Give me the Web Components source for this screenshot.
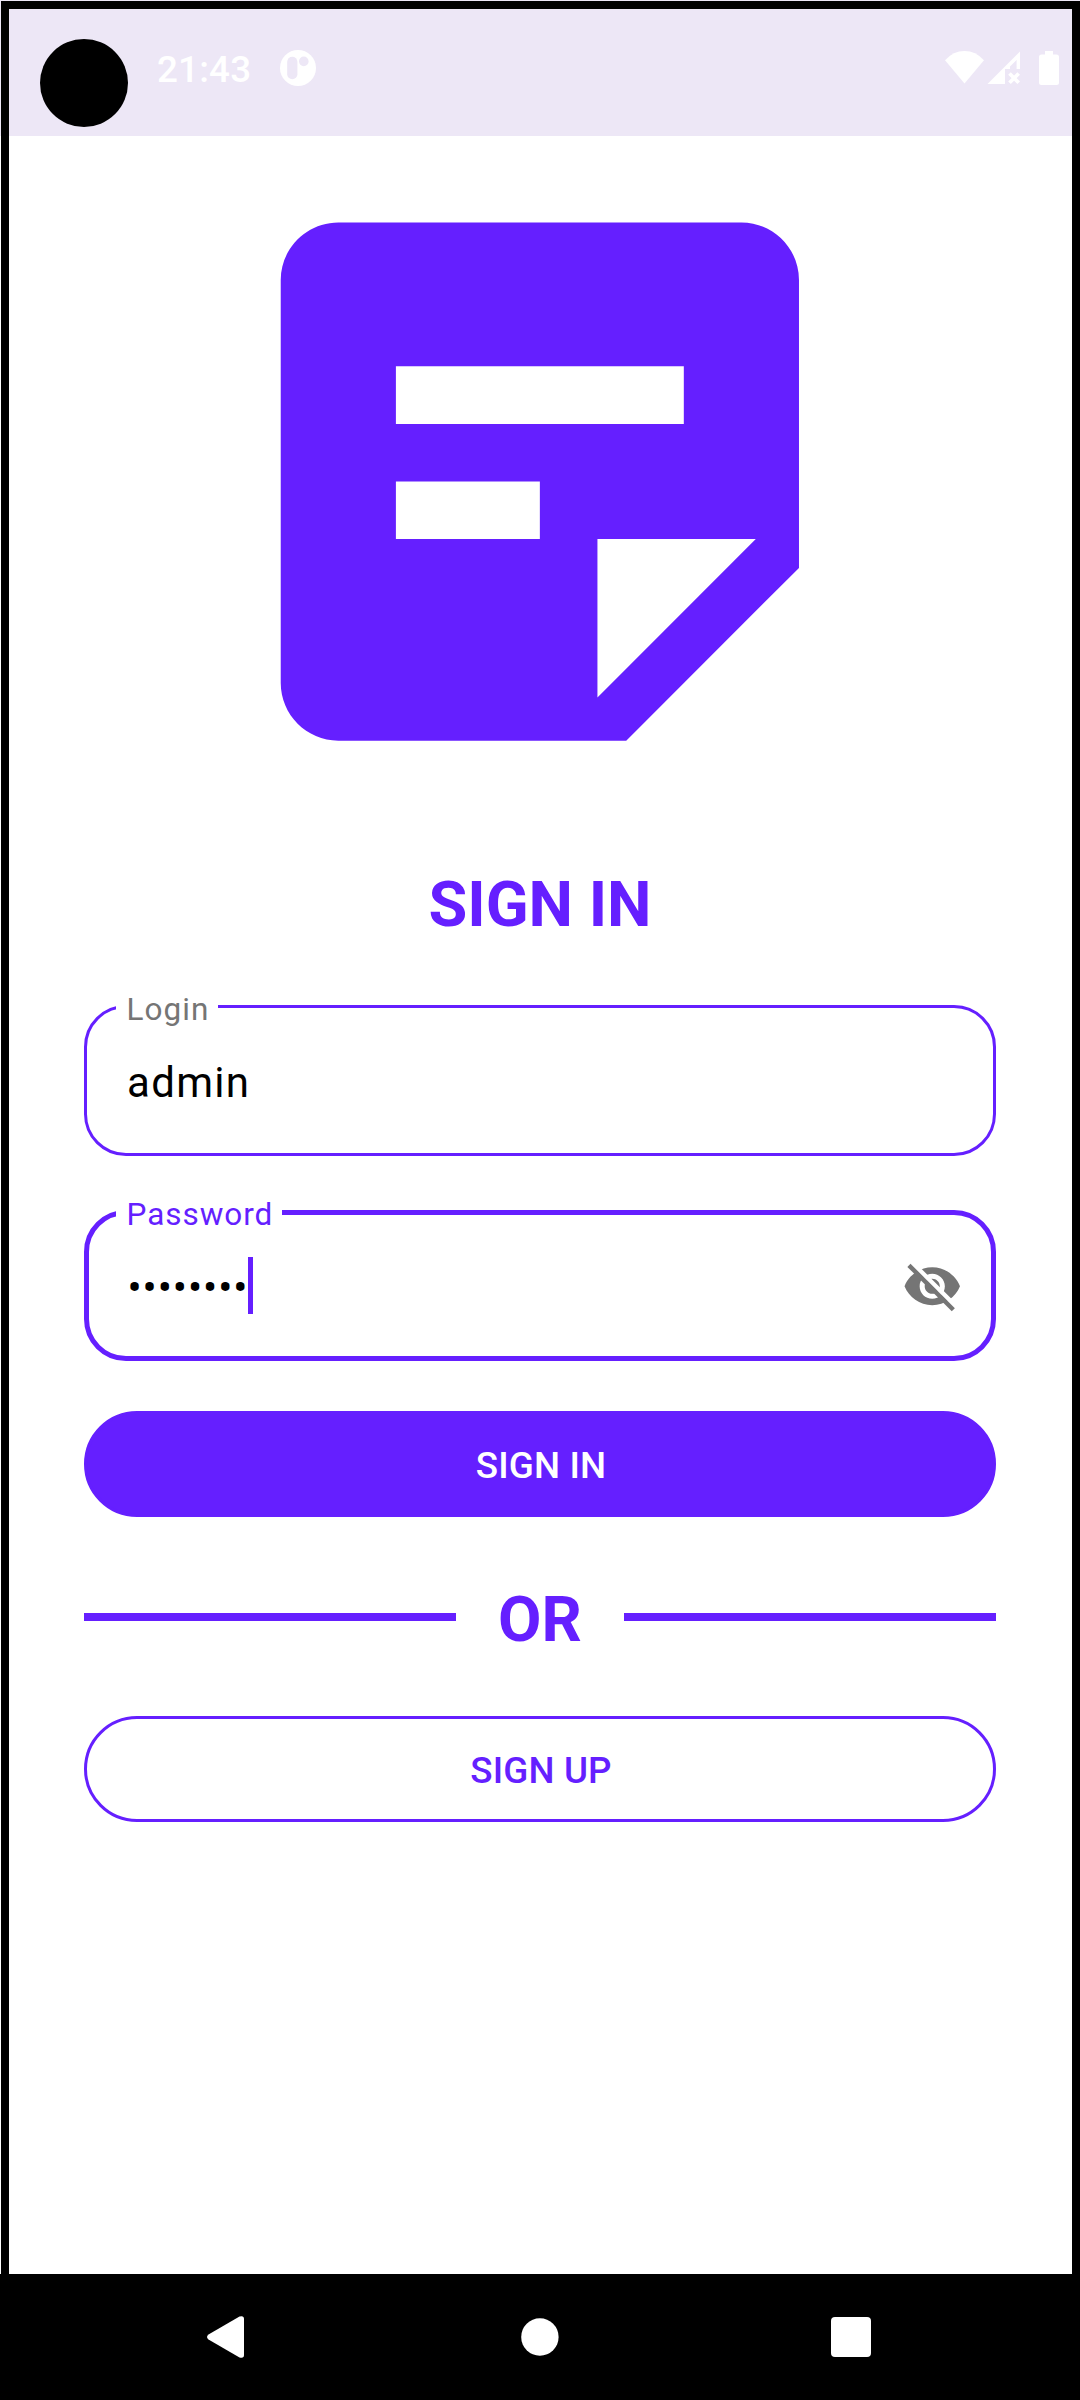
<!DOCTYPE html>
<html lang="en">
<head>
<meta charset="utf-8">
<title>Sign in</title>
<style>
html,body{margin:0;padding:0}
body{width:1080px;height:2400px;overflow:hidden;background:#fff;font-family:Roboto,"Noto Sans",sans-serif}
</style>
</head>
<body>
<notes-phone></notes-phone>
<script>
const define = (name, html) => customElements.define(name, class extends HTMLElement {
  constructor() {
    super();
    this.attachShadow({ mode: 'open' }).innerHTML = html;
  }
});

define('status-bar', `
<style>
:host{display:flex;box-sizing:border-box;height:136px;padding:0 21px 0 40px;background:#ede7f6;color:#fff}
.cam{width:88px;height:88px;border-radius:50%;background:#000;margin-top:39px}
.time{margin:47px 0 0 29px;font-size:36.75px;font-weight:500;line-height:45px;width:93px;letter-spacing:.2px;white-space:nowrap}
svg{display:block;flex:none}
.app{margin:50px 0 0 30px}
.icons{display:flex;margin:51px 0 0 auto}
</style>
<div class="cam"></div>
<div class="time">21:43</div>
<svg class="app" width="36" height="36" viewBox="0 0 36 36"><circle cx="18" cy="18" r="18" fill="#fff"/><rect x="7.2" y="6.7" width="10.2" height="22.6" rx="5.1" fill="#ede7f6"/><circle cx="23.8" cy="11.4" r="4.8" fill="#ede7f6"/></svg>
<div class="icons">
<svg width="114" height="34" viewBox="945 51 114 34" fill="#fff">
<path d="M945 60.3Q953.2 51 964.5 51T984 60.3L964.5 83.6Z"/>
<path fill-rule="evenodd" d="M1020 51.5V69H1016.6V60L1010 66.6V69H1005V84H987.5Z"/>
<path d="M1009.500 73.5L1018.700 82.700M1018.700 73.5L1009.500 82.700" stroke="#fff" stroke-width="3.700"/>
<path d="M1045 51H1053V54.5H1056.5Q1059 54.5 1059 57V82.5Q1059 85 1056.500 85H1041.500Q1039 85 1039 82.500V57Q1039 54.500 1041.500 54.500H1045Z"/>
</svg></div>`);

define('note-logo', `
<style>:host{display:block;height:691px}svg{display:block;margin:0 auto}</style>
<svg width="692" height="691" viewBox="0.005 0 24 24"><path fill="#651fff" fill-rule="evenodd" d="M19 3H5c-1.100 0-2 .9-2 2v14c0 1.100.9 2 2 2h10l6-6V5c0-1.100-.9-2-2-2zM7 8h10v2H7zM7 12h5v2H7zM14 19.500V14h5.500z"/></svg>`);

define('text-field', `
<style>
:host{display:block;position:relative;box-sizing:border-box;height:151px;border:3px solid #651fff;border-radius:42px;color:#000}
:host([active]){border-width:5px}
.label{position:absolute;left:29px;top:-17px;padding:0 9px 0 10.5px;background:#fff;color:#757575;font-size:31.5px;line-height:38px;letter-spacing:1.05px;white-space:nowrap}
:host([active]) .label{color:#651fff;left:27px;top:-19px;letter-spacing:.95px;padding-right:8.5px}
.row{display:flex;align-items:center;height:100%;padding:0 31px 0 40px;font-size:42px;letter-spacing:1.3px}
:host([active]) .row{padding:0 29px 0 38.5px;letter-spacing:.95px}
.value{line-height:50px;padding-top:4px;white-space:pre}
::slotted(svg){margin-left:auto;padding-top:2px;display:block}
.caret{display:none;width:5px;height:57px;background:#651fff}
:host([active]) .caret{display:block}
</style>
<div class="label"><slot name="label"></slot></div>
<div class="row"><span class="value"><slot></slot></span><span class="caret"></span><slot name="end"></slot></div>`);

define('pill-button', `
<style>
:host{display:flex;align-items:center;justify-content:center;box-sizing:border-box;height:106px;padding:3px 0 0 2px;border:3px solid #651fff;border-radius:53px;background:#651fff;color:#fff;font-size:36.75px;font-weight:500;line-height:44px;letter-spacing:.15px}
:host([outlined]){background:#fff;color:#651fff}
</style><slot></slot>`);

define('or-divider', `
<style>
:host{display:flex;align-items:center;height:74px;color:#651fff;font-size:63px;font-weight:700;line-height:74px}
i{flex:1;height:8px;background:#651fff}
span{width:168px;padding-top:5px;text-align:center}
</style><i></i><span><slot></slot></span><i></i>`);

define('nav-bar', `
<style>
:host{display:flex;height:126px;background:#000;justify-content:space-between;align-items:center;padding:0 209px 0 207px}
svg{display:block}
</style>
<svg width="40" height="42" viewBox="0 0 40 42"><path d="M32.500 .6Q37-.8 37 3V39Q37 42.800 32.500 41.400L1.500 23.500Q-1.500 21 1.500 18.500Z" fill="#fff"/></svg>
<svg width="40" height="38" viewBox="0 0 40 38"><circle cx="20.900" cy="19" r="18.700" fill="#fff"/></svg>
<svg width="40" height="40" viewBox="0 0 40 40"><rect width="40" height="40" rx="4" fill="#fff"/></svg>`);

define('sign-in-screen', `
<style>
:host{display:flex;flex-direction:column;box-sizing:border-box;height:2138px;padding:0 84px}
h1{margin:41px 0 0;height:74px;font-size:63px;font-weight:700;line-height:74px;color:#651fff;text-align:center}
.login{margin-top:63px}
.password{margin-top:54px}
.in{margin-top:50px}
or-divider{margin-top:63px}
.up{margin-top:62px}
</style>
<note-logo></note-logo>
<h1>SIGN IN</h1>
<text-field class="login"><span slot="label">Login</span>admin</text-field>
<text-field class="password" active><span slot="label">Password</span>••••••••<svg slot="end" width="60.500" height="60.500" viewBox="0 0 24 24">
<defs><mask id="m"><rect width="24" height="24" fill="#fff"/><path d="M1.850 .47L22.970 21.590" stroke="#000" stroke-width="1.750"/></mask></defs>
<path fill="#757575" mask="url(#m)" fill-rule="evenodd" d="M12 4.500C7 4.500 2.730 7.610 1 12c1.730 4.390 6 7.500 11 7.500s9.270-3.110 11-7.500c-1.730-4.390-6-7.500-11-7.500zM12 17c-2.760 0-5-2.240-5-5s2.240-5 5-5 5 2.240 5 5-2.240 5-5 5zM12 9c-1.660 0-3 1.340-3 3s1.340 3 3 3 3-1.340 3-3-1.340-3-3-3z"/>
<path d="M2.750 3.700L20.350 21.300" stroke="#757575" stroke-width="1.750"/></svg></text-field>
<pill-button class="in">SIGN IN</pill-button>
<or-divider>OR</or-divider>
<pill-button class="up" outlined>SIGN UP</pill-button>`);

define('notes-phone', `
<style>
:host{display:block;position:relative;width:1080px;height:2400px;background:#fff}
.frame{position:absolute;left:1px;top:1px;width:1079px;height:2273px;box-sizing:border-box;border:8px solid #000;border-bottom:0;pointer-events:none}
</style>
<status-bar></status-bar>
<sign-in-screen></sign-in-screen>
<nav-bar></nav-bar>
<div class="frame"></div>`);
</script>
</body>
</html>
